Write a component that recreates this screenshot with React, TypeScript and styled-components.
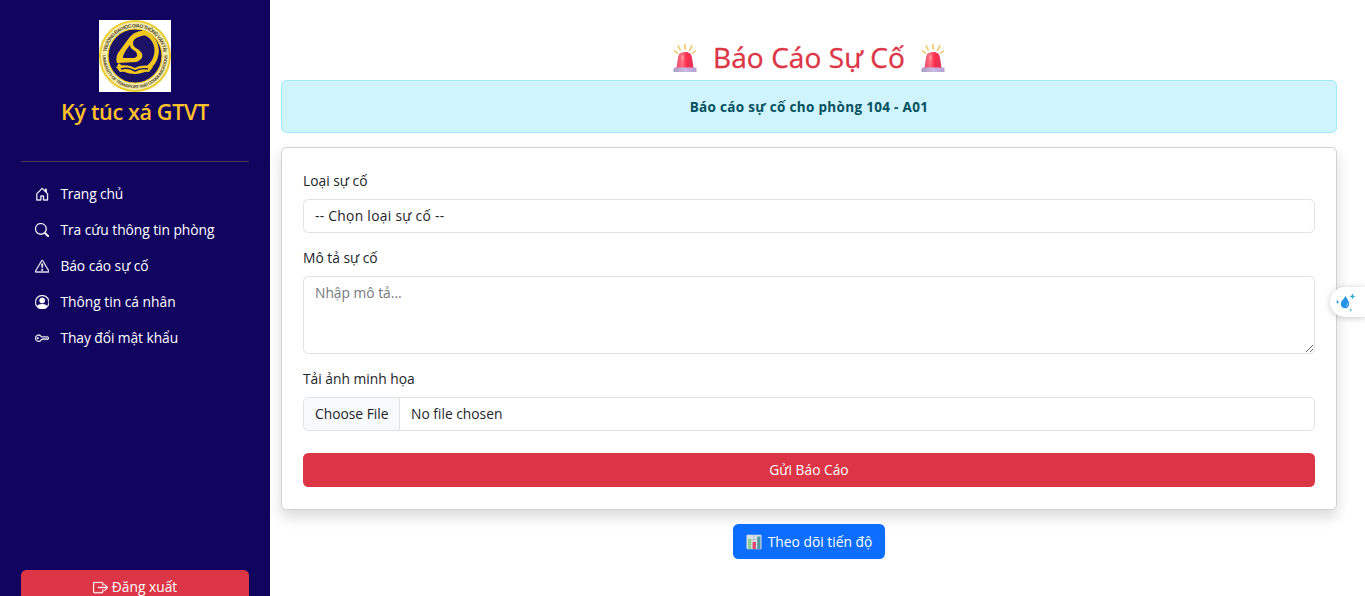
import React from 'react';
import styled, { createGlobalStyle } from 'styled-components';
import {
  BsHouseDoor,
  BsSearch,
  BsExclamationTriangle,
  BsPersonCircle,
  BsKey,
  BsBoxArrowRight,
} from 'react-icons/bs';

const GlobalStyle = createGlobalStyle`
  *, *::before, *::after { box-sizing: border-box; }
  html, body { margin: 0; height: 100%; overflow: hidden; background: #fff; }
  body {
    font-family: 'Open Sans', 'Noto Sans', sans-serif;
    font-size: 13.8px;
    line-height: 22px;
    color: #212529;
  }
  input, select, textarea, button { font: inherit; letter-spacing: inherit; color: inherit; margin: 0; }
`;

const Page = styled.div`
  display: flex;
  height: 596px;
  overflow: hidden;
`;

const Sidebar = styled.aside`
  flex: 0 0 270px;
  height: 604px;
  padding: 20px 21px 0;
  display: flex;
  flex-direction: column;
  background: #11045f;
  color: #fff;
`;

const Brand = styled.div`
  display: flex;
  flex-direction: column;
  align-items: center;
  height: 141px;
`;

const BrandName = styled.h4`
  margin: 7px 0 0;
  font-size: 21.6px;
  line-height: 26px;
  font-weight: 600;
  letter-spacing: -0.38px;
  color: #ffc12a;
  white-space: nowrap;
`;

const Divider = styled.hr`
  width: 100%;
  height: 1px;
  margin: 0 0 14px;
  border: 0;
  background: #533055;
`;

const Nav = styled.nav`
  display: flex;
  flex-direction: column;
  flex: 1;
`;

const NavItem = styled.a<{ $spacing?: number }>`
  display: flex;
  align-items: center;
  height: 36px;
  padding-left: 14px;
  gap: 11px;
  letter-spacing: ${(p) => p.$spacing ?? 0}px;
  white-space: nowrap;
  svg { width: 14.4px; height: 14.4px; flex: none; stroke: currentColor; stroke-width: 0.35px; }
`;

const Button = styled.button<{ $tone: string; $spacing?: number }>`
  display: flex;
  align-items: center;
  justify-content: center;
  gap: 4px;
  height: 34px;
  padding: 0 12px;
  border: 0;
  border-radius: 5.4px;
  background: ${(p) => p.$tone};
  color: #fff;
  letter-spacing: ${(p) => p.$spacing ?? 0}px;
  white-space: nowrap;
`;

const Main = styled.main`
  flex: 1;
  display: flex;
  flex-direction: column;
  padding: 36px 28px 0 11px;
`;

const Heading = styled.h2`
  display: flex;
  align-items: center;
  justify-content: center;
  gap: 16px;
  height: 44px;
  margin: 0;
  padding-bottom: 2px;
  font-size: 28px;
  line-height: 42px;
  font-weight: 500;
  letter-spacing: 0.1px;
  color: #dc3545;
  -webkit-text-stroke: 0.35px #dc3545;
  svg { margin-top: 2px; }
`;

const Notice = styled.div`
  display: flex;
  align-items: center;
  justify-content: center;
  height: 53px;
  border: 1px solid #9eeaf9;
  border-radius: 5.4px;
  background: #cff4fc;
  color: #055160;
  font-weight: 700;
  font-size: 13.5px;
  letter-spacing: 0.32px;
`;

const Card = styled.form`
  display: flex;
  flex-direction: column;
  height: 363px;
  margin: 14px 0;
  padding: 22px 21px;
  border: 1px solid #cfd1d3;
  border-radius: 5.4px;
  background: #fff;
  box-shadow: 0 7px 14px rgba(0, 0, 0, 0.15);
`;

const Label = styled.label`
  height: 22px;
  margin-bottom: 7px;
`;

const Select = styled.select`
  appearance: none;
  height: 34px;
  margin-bottom: 14px;
  padding: 0 11px;
  border: 1px solid #dee2e6;
  border-radius: 5.4px;
  background: #fff;
  letter-spacing: 0.3px;
  outline: 0;
`;

const TextArea = styled.textarea`
  display: block;
  height: 78px;
  margin-bottom: 14px;
  padding: 5px 11px;
  border: 1px solid #dee2e6;
  border-radius: 5.4px;
  resize: vertical;
  outline: 0;
  &::placeholder { color: #75797d; opacity: 1; }
`;

const FileField = styled.div`
  display: flex;
  height: 34px;
  margin-bottom: 22px;
  border: 1px solid #dee2e6;
  border-radius: 5.4px;
  overflow: hidden;
  line-height: 32px;
`;

const FileButton = styled.span`
  width: 96px;
  padding-left: 11px;
  border-right: 1px solid #dee2e6;
  background: #f8f9fa;
  white-space: nowrap;
`;

const FileName = styled.span`
  padding-left: 11px;
`;

const Actions = styled.div`
  display: flex;
  justify-content: center;
  button { width: 152px; height: 35px; gap: 6px; }
`;

const FloatingTool = styled.div`
  position: absolute;
  top: 287px;
  right: 0;
  width: 35px;
  height: 30px;
  padding: 4px 0 0 5px;
  border-radius: 15px 0 0 15px;
  background: #fff;
  box-shadow: 0 1px 6px rgba(0, 0, 0, 0.22);
  svg { display: block; }
`;

const Emblem = () => (
  <svg width="72" height="72" viewBox="0 0 72 72">
    <defs>
      <path id="arcTop" d="M7.3 36a28.7 28.7 0 0 1 57.4 0" />
      <path id="arcBottom" d="M4.2 31a32.2 32.2 0 1 0 63.6 0" />
    </defs>
    <rect width="72" height="72" fill="#fff" />
    <circle cx="36" cy="36" r="35" fill="#f6ecac" stroke="#e8cd35" strokeWidth="2" />
    <circle cx="36" cy="36" r="27" fill="#1b1266" stroke="#e8c420" strokeWidth="1.2" />
    <g fill="#51472f" fontFamily="Liberation Sans, sans-serif" fontWeight="700" fontSize="5">
      <text>
        <textPath href="#arcTop" startOffset="50%" textAnchor="middle" textLength="82">TRƯỜNG ĐẠI HỌC GIAO THÔNG VẬN TẢI</textPath>
      </text>
      <text fontSize="4.3">
        <textPath href="#arcBottom" startOffset="50%" textAnchor="middle" textLength="103">UNIVERSITY OF TRANSPORT AND COMMUNICATIONS</textPath>
      </text>
    </g>
    <path d="M46 11C58 16 63 29 58 40C54 49 45 54 36 54C28 54 22 51 18 46L20 43C25 48 30 50 36 50C44 50 51 45 54 38C58 29 54 18 45 15Z" fill="#f2c71d" />
    <path d="M47 11C40 10 34 13 30 18L19 33C17 37 17 40 18 43L37 42C43 40 45 36 42 32C39 28 34 28 34 23C34 18 41 16 47 15Z" fill="#f2c71d" />
    <path d="M31 25C27 30 24 34 24 38H35C39 37 39 34 36 31C33 29 31 28 31 25Z" fill="#1b1266" />
    <path d="M17 47C24 44 31 45 36 48C42 45 48 45 54 47L50 52C45 51 40 51 36 54C31 51 26 51 21 52Z" fill="#f2c71d" />
    <path d="M22 49C28 47 32 49 36 51C40 49 44 48 49 49" fill="none" stroke="#1b1266" strokeWidth="1.4" />
  </svg>
);

const Siren = ({ id }: { id: string }) => (
  <svg width="24" height="30" viewBox="0 0 24 30">
    <defs>
      <linearGradient id={id} x1="0" x2="1">
        <stop offset="0" stopColor="#e84a69" />
        <stop offset=".35" stopColor="#ff7180" />
        <stop offset=".6" stopColor="#fb2e4d" />
        <stop offset="1" stopColor="#e83357" />
      </linearGradient>
      <linearGradient id={`${id}-base`} x1="0" x2="1">
        <stop offset="0" stopColor="#a99bc0" />
        <stop offset=".5" stopColor="#cbbbe3" />
        <stop offset="1" stopColor="#b89ad4" />
      </linearGradient>
    </defs>
    <g stroke="#efc056" strokeWidth="1.500" strokeLinecap="round">
      <path d="M12 1.500V6M5 3L7.300 7M19 3L16.700 7M1.800 8L4.600 10M22.200 8L19.400 10" />
    </g>
    <path d="M3.500 25L5.100 14C5.700 10.800 8.300 9 12 9S18.300 10.800 18.900 14L20.500 25Z" fill={`url(#${id})`} />
    <ellipse cx="9.500" cy="15" rx="1.500" ry="3" fill="#ff98a0" opacity=".7" />
    <path d="M.5 26Q.5 24.500 2 24.500H22Q23.500 24.500 23.500 26V29H.5Z" fill={`url(#${id}-base)`} />
  </svg>
);

const Chart = () => (
  <svg width="16" height="16" viewBox="0 0 16 16">
    <rect x=".5" y=".8" width="15" height="14.500" rx="1" fill="#d5dfea" />
    <path d="M.5 5.500H15.500M.5 10.500H15.500M8 1V15" stroke="#aebed2" strokeWidth=".6" />
    <rect x="2" y="5" width="3.200" height="10" fill="#8bcf8c" />
    <rect x="6.600" y="8" width="3.200" height="7" fill="#e64268" />
    <rect x="11.200" y="2.500" width="3.200" height="12.500" fill="#4f9aa5" />
  </svg>
);

const Droplet = () => (
  <svg width="21" height="22" viewBox="0 0 21 22">
    <path d="M10.500 4.500C11 7 14.200 9.600 14.200 13A4.200 4.200 0 0 1 5.800 13C5.800 9.600 9.800 7.800 10.500 4.500Z" fill="#2492e8" />
    <path d="M12.500 12.200Q12.800 14.500 11 15.300" fill="none" stroke="#a9dcfa" strokeWidth=".9" />
    <path d="M17.500 2.200L18.300 4.600L20.500 5.400L18.300 6.200L17.500 8.600L16.700 6.200L14.500 5.400L16.700 4.600Z" fill="#35add1" />
    <path d="M2.500 8.700L3.100 10.400L4.700 11L3.100 11.600L2.500 13.300L1.900 11.600L.4 11L1.900 10.400Z" fill="#329ed8" />
    <path d="M15.700 17.200L16.200 18.500L17.400 19L16.200 19.500L15.700 20.800L15.200 19.500L14 19L15.200 18.500Z" fill="#43bacb" />
  </svg>
);

const links = [
  { icon: BsHouseDoor, text: 'Trang chủ', spacing: -0.15 },
  { icon: BsSearch, text: 'Tra cứu thông tin phòng', spacing: -0.05 },
  { icon: BsExclamationTriangle, text: 'Báo cáo sự cố', spacing: -0.05 },
  { icon: BsPersonCircle, text: 'Thông tin cá nhân', spacing: 0 },
  { icon: BsKey, text: 'Thay đổi mật khẩu', spacing: -0.07 },
];

export default function App() {
  return (
    <>
      <GlobalStyle />
      <Page>
        <Sidebar>
          <Brand>
            <Emblem />
            <BrandName>Ký túc xá GTVT</BrandName>
          </Brand>
          <Divider />
          <Nav>
            {links.map(({ icon: Icon, text, spacing }) => (
              <NavItem key={text} $spacing={spacing}>
                <Icon />
                <span>{text}</span>
              </NavItem>
            ))}
          </Nav>
          <Button $tone="#dc3545">
            <BsBoxArrowRight size={15} stroke="currentColor" strokeWidth={0.3} />
            <span>Đăng xuất</span>
          </Button>
        </Sidebar>
        <Main>
          <Heading>
            <Siren id="siren-left" />
            <span>Báo Cáo Sự Cố</span>
            <Siren id="siren-right" />
          </Heading>
          <Notice>Báo cáo sự cố cho phòng 104 - A01</Notice>
          <Card>
            <Label>Loại sự cố</Label>
            <Select>
              <option>-- Chọn loại sự cố --</option>
            </Select>
            <Label>Mô tả sự cố</Label>
            <TextArea placeholder="Nhập mô tả..." />
            <Label>Tải ảnh minh họa</Label>
            <FileField>
              <FileButton>Choose File</FileButton>
              <FileName>No file chosen</FileName>
            </FileField>
            <Button type="button" $tone="#dc3545">Gửi Báo Cáo</Button>
          </Card>
          <Actions>
            <Button $tone="#0d6efd">
              <Chart />
              <span>Theo dõi tiến độ</span>
            </Button>
          </Actions>
        </Main>
      </Page>
      <FloatingTool>
        <Droplet />
      </FloatingTool>
    </>
  );
}
